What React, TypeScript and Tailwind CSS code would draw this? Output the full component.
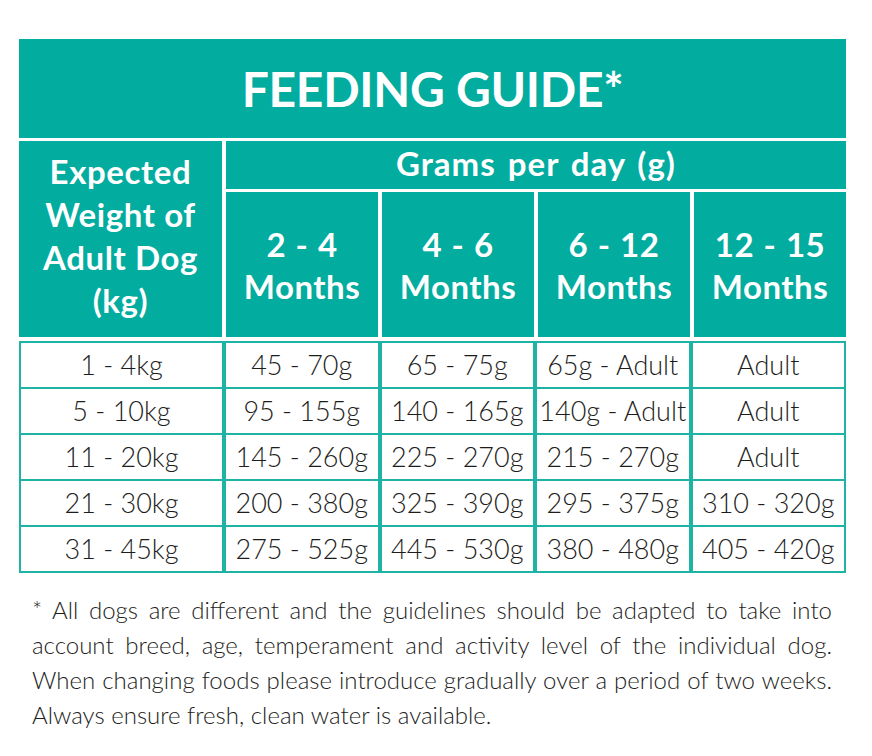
import React from "react";

const months = ["2 - 4", "4 - 6", "6 - 12", "12 - 15"];

const rows = [
  ["1 - 4kg", "45 - 70g", "65 - 75g", "65g - Adult", "Adult"],
  ["5 - 10kg", "95 - 155g", "140 - 165g", "140g - Adult", "Adult"],
  ["11 - 20kg", "145 - 260g", "225 - 270g", "215 - 270g", "Adult"],
  ["21 - 30kg", "200 - 380g", "325 - 390g", "295 - 375g", "310 - 320g"],
  ["31 - 45kg", "275 - 525g", "445 - 530g", "380 - 480g", "405 - 420g"],
];

const note = [
  "* All dogs are different and the guidelines should be adapted to take into",
  "account breed, age, temperament and activity level of the individual dog.",
  "When changing foods please introduce gradually over a period of two weeks.",
];

export default function App() {
  return (
    <div className="min-h-[756px] w-[872px] bg-white pt-[39px] font-['Lato',sans-serif]">
      <div className="ml-[19px] w-[827px]">
        {/* Title */}
        <div className="flex h-[99px] items-center justify-center bg-[#02ac9f]">
          <h1 className="text-[48px] font-bold leading-none tracking-[-0.3px] text-white">
            FEEDING GUIDE*
          </h1>
        </div>

        {/* Header */}
        <div className="mt-[3px] grid grid-cols-[203px_1fr_1fr_1fr_1fr] grid-rows-[48px_145px] gap-x-[4px] gap-y-[3px]">
          <div className="row-span-2 flex items-center justify-center bg-[#02ac9f] pb-[7px] text-center text-[33px] font-bold leading-[43px] tracking-[0.6px] text-white">
            <span>
              Expected
              <br />
              Weight of
              <br />
              Adult Dog
              <br />
              (kg)
            </span>
          </div>
          <div className="col-span-4 flex items-center justify-center bg-[#02ac9f] pb-[2px] text-[33px] font-bold tracking-[1px] text-white [word-spacing:3px]">
            Grams per day (g)
          </div>
          {months.map((m) => (
            <div
              key={m}
              className="flex flex-col items-center justify-center bg-[#02ac9f] text-center text-[33px] font-bold leading-[42px] tracking-[0.5px] text-white"
            >
              <span className="[word-spacing:1px]">{m}</span>
              <span>Months</span>
            </div>
          ))}
        </div>

        {/* Body */}
        <div className="mt-[4px] grid grid-cols-[201px_1fr_1fr_1fr_1fr] gap-x-[4px] gap-y-[2px] bg-[#1fb3a6] p-[2px]">
          {rows.map((r, i) =>
            r.map((c, j) => (
              <div
                key={`${i}-${j}`}
                className="flex h-[44px] items-center justify-center whitespace-nowrap bg-white text-[27px] font-light text-[#1d1d1b]"
              >
                {c}
              </div>
            ))
          )}
        </div>
      </div>

      {/* Footnote */}
      <div className="ml-[32px] mt-[19px] w-[800px] text-[24px] font-light leading-[35px] text-[#1d1d1b]">
        {note.map((line) => (
          <p key={line} className="whitespace-nowrap text-justify [text-align-last:justify]">
            {line}
          </p>
        ))}
        <p>Always ensure fresh, clean water is available.</p>
      </div>
    </div>
  );
}
